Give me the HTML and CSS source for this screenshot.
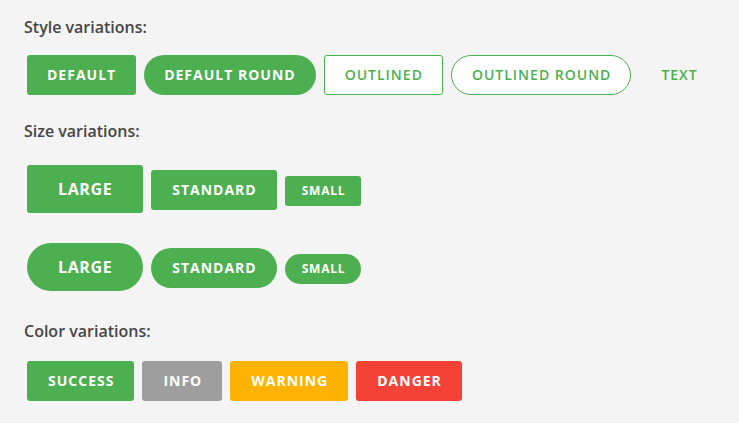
FILE: index.html
```html
<!DOCTYPE html>
<html>
<head>
<meta charset="utf-8">
<link rel="stylesheet" href="styles.css">
</head>
<body>
<div class="page">
  <h3 class="label first">Style variations:</h3>
  <div class="row row-style">
    <button class="btn">Default</button>
    <button class="btn round">Default round</button>
    <button class="btn outlined">Outlined</button>
    <button class="btn outlined round">Outlined round</button>
    <button class="btn text">Text</button>
  </div>

  <h3 class="label second">Size variations:</h3>
  <div class="row row-size">
    <button class="btn large">Large</button>
    <button class="btn">Standard</button>
    <button class="btn small">Small</button>
  </div>
  <div class="row row-size-round">
    <button class="btn large round">Large</button>
    <button class="btn round">Standard</button>
    <button class="btn small round">Small</button>
  </div>

  <h3 class="label third">Color variations:</h3>
  <div class="row row-color">
    <button class="btn">Success</button>
    <button class="btn info">Info</button>
    <button class="btn warning">Warning</button>
    <button class="btn danger">Danger</button>
  </div>
</div>
</body>
</html>
```

FILE: styles.css
```css
html, body {
  margin: 0;
  background: #f4f4f4;
}
body {
  font-family: "Open Sans", "Noto Sans", sans-serif;
  color: #444;
}
.page {
  padding: 16px 0 0 24px;
}
.label {
  margin: 0;
  font-size: 16px;
  font-weight: 600;
  line-height: 22px;
  color: #464646;
}
.label.second { margin-top: 25px; }
.label.third { margin-top: 29px; }
.row {
  display: flex;
  align-items: baseline;
  gap: 8px;
  padding-left: 3px;
}
.row-style { margin-top: 17px; }
.row-size { margin-top: 23px; }
.row-size-round { margin-top: 30px; }
.row-color { margin-top: 19px; }

.btn {
  flex-shrink: 0;
  white-space: nowrap;
  font-family: "Open Sans", "Noto Sans", sans-serif;
  font-weight: 700;
  font-size: 14px;
  letter-spacing: 1px;
  text-transform: uppercase;
  height: 40px;
  line-height: 40px;
  padding: 0 20px 0 21px;
  border: none;
  border-radius: 3px;
  background: #4caf50;
  color: #fff;
  cursor: pointer;
}
.row-style .btn { padding: 0 20px; }
.btn.round { border-radius: 20px; }
.btn.outlined {
  background: #fff;
  color: #4caf50;
  border: 1px solid #4caf50;
  line-height: 38px;
  font-weight: 600;
}
.row-style .btn.outlined { padding: 0 19px 0 20px; }
.btn.text {
  background: transparent;
  color: #4caf50;
  font-weight: 600;
  margin-left: 2px;
}
.btn.large {
  height: 48px;
  line-height: 48px;
  font-size: 16px;
  letter-spacing: 0.6px;
  padding: 0 31px 0 31px;
}
.btn.large.round { border-radius: 24px; }
.btn.small {
  height: 30px;
  line-height: 30px;
  font-size: 12px;
  letter-spacing: 0.8px;
  padding: 0 16px 0 17px;
}
.btn.small.round { border-radius: 15px; }
.btn.info { background: #9e9e9e; }
.btn.warning { background: #ffb300; }
.btn.danger { background: #f44336; }
```
